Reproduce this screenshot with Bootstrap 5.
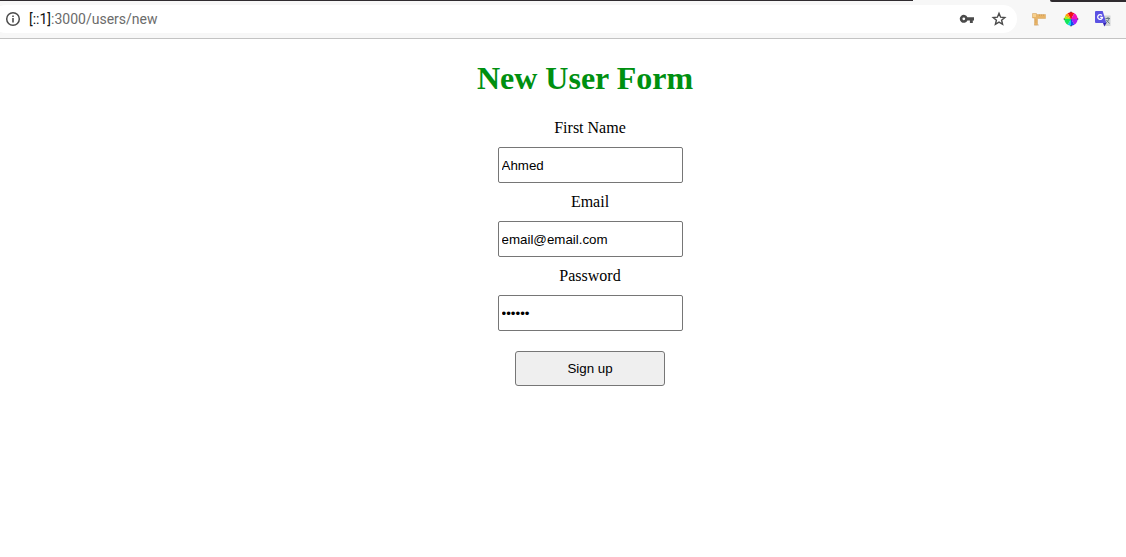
<!DOCTYPE html>
<html lang="en">
<head>
<meta charset="utf-8">
<meta name="viewport" content="width=device-width, initial-scale=1">
<title>New User Form</title>
<link href="https://cdn.jsdelivr.net/npm/bootstrap@5.3.0/dist/css/bootstrap.min.css" rel="stylesheet">
<style>
  body { background: #fff; color: #000; font-family: "Liberation Serif", serif; }
  .tab-row { height: 1px; background: #f7f7f7; }
  .strip { height: 1px; background: #2f2b2f; }
  .strip-end { width: 76px; height: 2px; border-bottom-left-radius: 4px; }
  .tab-gap { width: 137px; }
  .toolbar { background: #f7f7f7; border-bottom: 1px solid #c3c3c3; padding: 4px 15px 5px 0; }
  .omnibox { height: 28px; background: #fff; border-radius: 14px; margin-left: -8px; padding: 0 10px 0 13px; }
  .address { color: #6b6b6b; font: 14px/20px Roboto, sans-serif; outline: 0; margin-left: 8px; }
  .address span { color: #111; }
  .extensions { margin-left: 14px; }
  .tool { border: 0; padding: 0; background: none; width: 16px; height: 16px; line-height: 0; }
  .tool svg { width: 16px; height: 16px; display: block; }
  .title { color: #009010; font-size: 32px; font-weight: 700; line-height: 36px; margin: 21px 0 23px; padding-left: 44px; }
  .user-form { padding-left: 54px; }
  .user-form label { font-size: 16px; line-height: 18px; margin-bottom: 10px; }
  .field, .submit { font-family: "Liberation Sans", sans-serif; font-size: revert; color: #000; border: 1px solid #767676; }
  .field { width: 185px; height: 36px; padding: 0 3px; border-radius: 2px; background: #fff; margin-bottom: 10px; }
  .submit { width: 150px; height: 35px; border-radius: 3px; background: #efefef; margin-top: 10px; }
</style>
</head>
<body>
<header>
  <div class="tab-row d-flex">
    <div class="strip flex-grow-1"></div>
    <div class="tab-gap"></div>
    <div class="strip strip-end"></div>
  </div>
  <div class="toolbar d-flex align-items-center">
    <div class="omnibox d-flex align-items-center flex-grow-1">
      <button class="tool" type="button" aria-label="Site information">
        <svg viewBox="0 0 16 16"><circle cx="8" cy="8" r="6.3" fill="none" stroke="#4b4b4b" stroke-width="1.5"/><path d="M7.2 7h1.6v4.5H7.2zM7.2 4.5h1.6V6H7.2z" fill="#4b4b4b"/></svg>
      </button>
      <div class="address flex-grow-1" role="textbox" aria-label="Address" contenteditable="true" spellcheck="false"><span>[::1]</span>:3000/users/new</div>
      <div class="d-flex gap-3">
        <button class="tool" type="button" aria-label="Saved passwords">
          <svg viewBox="0 0 16 16"><path fill="#4b4b4b" fill-rule="evenodd" d="M8.4 6.2H15v3.2h-1.2V12h-2.9V9.4H8.400A4 4 0 1 1 8.400 6.200zM4.800 6.400a1.400 1.400 0 1 0 0 2.800 1.400 1.400 0 0 0 0-2.800z"/></svg>
        </button>
        <button class="tool" type="button" aria-label="Bookmark this page">
          <svg viewBox="0 0 16 16"><path fill="none" stroke="#4b4b4b" stroke-width="1.4" d="M8 2.300 9.600 6.200l4.200.3-3.200 2.700 1 4.100L8 11.100l-3.600 2.200 1-4.100L2.200 6.500l4.200-.3z"/></svg>
        </button>
      </div>
    </div>
    <div class="extensions d-flex gap-3">
      <button class="tool" type="button" aria-label="Page ruler">
        <svg viewBox="0 0 16 16"><path fill="#d8c9b5" d="M3 13.500h5v1H3z"/><path fill="#e8b467" stroke="#d5a562" stroke-width=".5" d="M1.500 2.500h4v1h9v4h-8v6.500h-3V7h-2z"/><path stroke="#c8924e" stroke-width=".5" d="M8.500 3.500v1.500m2-1.500v1.500m2-1.500v1.500M4 9h1.500M4 11h1.500"/><path fill="#f7d08d" d="M2 3h3v3H2z"/></svg>
      </button>
      <button class="tool" type="button" aria-label="Color picker">
        <svg viewBox="0 0 16 16"><path stroke="#555" stroke-width="2" d="M8 .8v14.400M.8 8h14.400"/>
          <path fill="#f01018" d="M8 8 4.700 2.300a6.600 6.600 0 0 1 6.600 0z"/><path fill="#f012b8" d="M8 8l3.300-5.700A6.600 6.600 0 0 1 14.600 8z"/><path fill="#a51cf5" d="M8 8h6.600a6.600 6.600 0 0 1-3.300 5.700z"/><path fill="#1648ee" d="m8 8 3.300 5.700A6.600 6.600 0 0 1 8 14.600z"/><path fill="#08cfe8" d="M8 8v6.600a6.600 6.600 0 0 1-3.300-.9z"/><path fill="#12e65b" d="m8 8-3.300 5.700A6.600 6.600 0 0 1 1.400 8z"/><path fill="#a9ee17" d="M8 8H1.400a6.600 6.600 0 0 1 .9-3.300z"/><path fill="#ff9a0c" d="M8 8 2.300 4.700a6.600 6.600 0 0 1 2.400-2.400z"/></svg>
      </button>
      <button class="tool" type="button" aria-label="Translate">
        <svg viewBox="0 0 16 16"><path fill="#d2d4d5" d="M7 4.500h8.500V15H10z"/><path fill="none" stroke="#667d83" d="M10.500 7.500h4.500m-2-1.500v1.500m1 0c-.5 2-1.800 3.500-3 4.300m.3-2.800 3.200 3.500"/><path fill="#3020aa" d="m8 12 3.500 0-2.200 3.600z"/><path fill="#5b52e3" d="M1 0h6.700l3.600 12H1a1 1 0 0 1-1-1V1a1 1 0 0 1 1-1z"/><path fill="none" stroke="#fff" stroke-width="1.300" d="M7 4.500A2.400 2.400 0 1 0 7.500 6.300H5.200"/></svg>
      </button>
    </div>
  </div>
</header>
<main>
  <h1 class="title text-center">New User Form</h1>
  <form class="user-form d-flex flex-column align-items-center">
    <label for="first-name">First Name</label>
    <input class="field" id="first-name" type="text" value="Ahmed">
    <label for="email">Email</label>
    <input class="field" id="email" type="email" value="email@email.com">
    <label for="password">Password</label>
    <input class="field" id="password" type="password" value="secret">
    <button class="submit" type="submit">Sign up</button>
  </form>
</main>
<script src="https://cdn.jsdelivr.net/npm/bootstrap@5.3.0/dist/js/bootstrap.bundle.min.js"></script>
</body>
</html>
